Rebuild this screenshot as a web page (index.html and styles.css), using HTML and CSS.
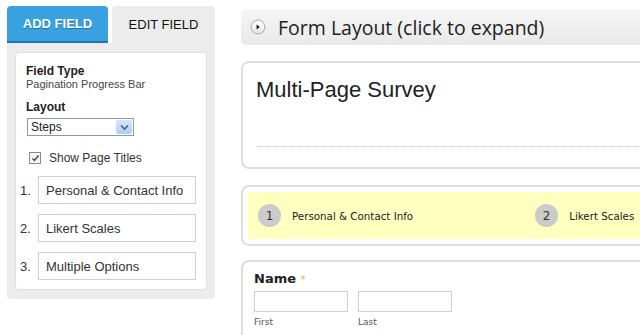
FILE: index.html
```html
<!doctype html>
<html lang="en">

<head>
    <meta charset="UTF-8" />
    <meta name="viewport" content="width=device-width, initial-scale=1.0" />
    <title>Form Builder</title>
    <link rel="stylesheet" href="styles.css">
</head>

<body>
    <div class="page">
        <aside class="sidebar">
            <div class="tabs">
                <div class="tab tab--active">ADD FIELD</div>
                <div class="tab">EDIT FIELD</div>
            </div>
            <div class="panel">
                <div class="panel__box">
                    <div class="prop">
                        <div class="prop__label">Field Type</div>
                        <div class="prop__value">Pagination Progress Bar</div>
                    </div>
                    <div class="prop">
                        <div class="prop__label">Layout</div>
                        <div class="select">
                            <span class="select__text">Steps</span>
                            <span class="select__btn">
                                <svg width="9" height="7" viewBox="0 0 9 7">
                                    <path d="M1 1.5 L4.5 5 L8 1.5" fill="none" stroke="#4d6185" stroke-width="1.6" />
                                </svg>
                            </span>
                        </div>
                    </div>
                    <div class="check">
                        <span class="check__box">
                            <svg width="9" height="9" viewBox="0 0 9 9">
                                <path d="M1.5 4.5 L3.5 6.5 L7.5 1.5" fill="none" stroke="#2d5a2d" stroke-width="1.5" />
                            </svg>
                        </span>
                        <span>Show Page Titles</span>
                    </div>
                    <div class="pages">
                        <div class="pages__row">
                            <span class="pages__num">1.</span>
                            <div class="pages__input">Personal &amp; Contact Info</div>
                        </div>
                        <div class="pages__row">
                            <span class="pages__num">2.</span>
                            <div class="pages__input">Likert Scales</div>
                        </div>
                        <div class="pages__row">
                            <span class="pages__num">3.</span>
                            <div class="pages__input">Multiple Options</div>
                        </div>
                    </div>
                </div>
            </div>
        </aside>

        <main class="main">
            <div class="expander">
                <svg class="expander__icon" width="16" height="16" viewBox="0 0 16 16">
                    <defs>
                        <linearGradient id="btn" x1="0" y1="0" x2="0" y2="1">
                            <stop offset="0" stop-color="#ffffff" />
                            <stop offset="1" stop-color="#e4e4e4" />
                        </linearGradient>
                    </defs>
                    <circle cx="8" cy="8" r="7" fill="url(#btn)" stroke="#a9a9a9" />
                    <path d="M6.6 5.4 L9.8 8 L6.6 10.6 Z" fill="#111" />
                </svg>
                <span>Form Layout (click to expand)</span>
            </div>

            <section class="card card--title">
                <h1 class="card__heading">Multi-Page Survey</h1>
                <div class="card__rule"></div>
            </section>

            <section class="card card--steps">
                <div class="steps">
                    <div class="steps__item">
                        <span class="steps__num">1</span>
                        <span class="steps__label">Personal &amp; Contact Info</span>
                    </div>
                    <div class="steps__item">
                        <span class="steps__num">2</span>
                        <span class="steps__label">Likert Scales</span>
                    </div>
                </div>
            </section>

            <section class="card card--field">
                <div class="field__label">Name <span class="field__req">*</span></div>
                <div class="field__inputs">
                    <div class="field__part">
                        <div class="field__input"></div>
                        <span class="field__sub">First</span>
                    </div>
                    <div class="field__part">
                        <div class="field__input"></div>
                        <span class="field__sub">Last</span>
                    </div>
                </div>
            </section>
        </main>
    </div>
</body>

</html>
```

FILE: styles.css
```css
* {
    margin: 0;
    padding: 0;
    box-sizing: border-box;
}

html,
body {
    height: 100%;
    overflow: hidden;
}

body {
    background: white;
    color: #222;
    font-family: 'Liberation Sans', Arial, sans-serif;
}

.page {
    display: flex;
    align-items: flex-start;
    gap: 26px;
    padding: 6px 0 0 7px;
}

/* sidebar */

.sidebar {
    width: 208px;
    flex: none;
}

.tabs {
    display: flex;
    gap: 4px;
}

.tab {
    height: 37px;
    width: 103px;
    display: flex;
    align-items: center;
    justify-content: center;
    background: #ececec;
    border-top-left-radius: 4px;
    border-top-right-radius: 4px;
    font-size: 13px;
    color: #111;
}

.tab--active {
    width: 101px;
    background: #38a2e0;
    border-bottom: 2px solid #1a72c0;
    color: white;
    font-weight: bold;
    text-shadow: 0 1px 1px rgba(0, 0, 0, 0.35);
}

.panel {
    background: #ececec;
    padding: 9px 8px;
    border-bottom-left-radius: 4px;
    border-bottom-right-radius: 4px;
}

.panel__box {
    background: white;
    border: 1px solid #e0e0e0;
    border-radius: 4px;
    padding: 11px 9px 9px 10px;
}

.prop {
    margin-bottom: 9px;
}

.prop__label {
    font-size: 12px;
    font-weight: bold;
    line-height: 14px;
}

.prop__value {
    font-size: 11px;
    line-height: 13px;
    color: #444;
}

.select {
    display: flex;
    align-items: center;
    width: 107px;
    height: 18px;
    margin-top: 4px;
    margin-left: 1px;
    border: 1px solid #7f9db9;
    font-size: 12px;
    color: #222;
}

.select__text {
    flex: 1;
    padding-left: 3px;
}

.select__btn {
    width: 16px;
    height: 14px;
    margin-right: 1px;
    display: flex;
    align-items: center;
    justify-content: center;
    background: linear-gradient(#d6e4fb, #b3cbf3);
    border-radius: 2px;
}

.check {
    display: flex;
    align-items: center;
    gap: 8px;
    margin: 15px 0 0 3px;
    font-size: 12px;
    color: #333;
}

.check__box {
    width: 12px;
    height: 12px;
    border: 1px solid #8a8a8a;
    display: flex;
    align-items: center;
    justify-content: center;
    background: #f6f6f6;
}

.pages {
    margin-top: 11px;
    margin-left: -8px;
    display: flex;
    flex-direction: column;
    gap: 10px;
}

.pages__row {
    display: flex;
    align-items: center;
}

.pages__num {
    width: 20px;
    padding-left: 2px;
    font-size: 13px;
    color: #333;
}

.pages__input {
    width: 158px;
    height: 28px;
    border: 1px solid #cfcfcf;
    padding-left: 7px;
    display: flex;
    align-items: center;
    font-size: 13px;
    color: #333;
}

/* main column */

.main {
    flex: none;
    width: 440px;
    display: flex;
    flex-direction: column;
    gap: 14px;
    padding-top: 3px;
}

.expander {
    height: 36px;
    display: flex;
    align-items: center;
    gap: 12px;
    padding-left: 9px;
    background: linear-gradient(#f6f6f6, #e9e9e9);
    border-radius: 5px;
    font-family: 'Open Sans', sans-serif;
    font-size: 19.5px;
    color: #222;
}

.expander__icon {
    flex: none;
}

.card {
    border: 2px solid #dedede;
    border-radius: 8px;
}

.card--title {
    height: 108px;
    padding: 14px 0 0 13px;
    margin-top: 2px;
}

.card__heading {
    font-size: 22px;
    font-weight: normal;
    color: #222;
    line-height: 26px;
}

.card__rule {
    margin-top: 43px;
    border-top: 1px dotted #c4c4c4;
}

.card--steps {
    padding: 5px;
    margin-top: 2px;
}

.steps {
    height: 47px;
    background: #ffffc0;
    display: flex;
    align-items: center;
    gap: 122px;
    padding-left: 10px;
    font-family: 'DejaVu Sans', sans-serif;
}

.steps__item {
    display: flex;
    align-items: center;
    gap: 11px;
}

.steps__num {
    width: 23px;
    height: 23px;
    border-radius: 50%;
    background: #cbcbcb;
    display: flex;
    align-items: center;
    justify-content: center;
    font-size: 12px;
    color: #333;
}

.steps__label {
    font-size: 10.3px;
    color: #222;
}

.card--field {
    height: 90px;
    padding: 9px 0 0 11px;
    border-bottom: 0;
    border-bottom-left-radius: 0;
    border-bottom-right-radius: 0;
    font-family: 'DejaVu Sans', sans-serif;
}

.field__label {
    font-size: 13px;
    font-weight: bold;
    color: #222;
    line-height: 16px;
}

.field__req {
    color: #c8c060;
    font-weight: normal;
    font-size: 10px;
}

.field__inputs {
    display: flex;
    gap: 10px;
    margin-top: 3px;
}

.field__part {
    display: flex;
    flex-direction: column;
    gap: 5px;
}

.field__input {
    width: 94px;
    height: 21px;
    border: 1px solid #cfcfcf;
}

.field__sub {
    font-size: 9px;
    color: #555;
}
```
